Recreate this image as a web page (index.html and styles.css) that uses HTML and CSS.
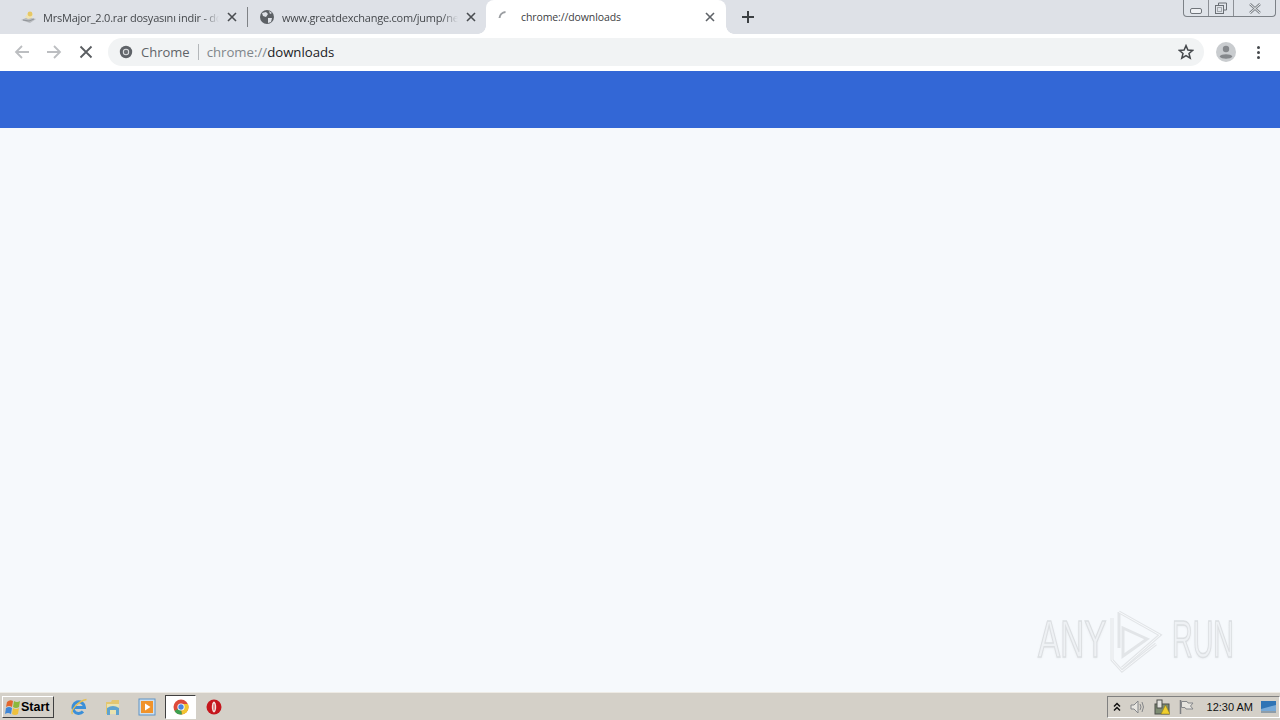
FILE: index.html
```html
<!doctype html>
<html>
<head>
  <meta charset="utf-8">
  <title>chrome://downloads</title>
  <link rel="stylesheet" href="styles.css">
</head>
<body>
<div class="screen">

  <div class="tabstrip">
    <div class="tab tab-first">
      <svg class="favicon" width="18" height="16" viewBox="0 0 18 16">
        <path d="M1 11 L8 8 L16 10 L10 14 Z" fill="#b9bcc0"/>
        <path d="M5 8 L9 3 L13 5 L12 9 L8 10 Z" fill="#efe3b4"/>
        <circle cx="10" cy="5" r="2.4" fill="#e6c765"/>
        <path d="M3 11 L9 12 L14 10" fill="none" stroke="#8f9398" stroke-width="1"/>
      </svg>
      <span class="tab-title">MrsMajor_2.0.rar dosyasını indir - do</span>
      <svg class="tab-close" width="10" height="10" viewBox="0 0 10 10"><path d="M1 1 L9 9 M9 1 L1 9" stroke="#4a4d51" stroke-width="1.6"/></svg>
    </div>
    <div class="tab-sep"></div>
    <div class="tab tab-second">
      <svg class="favicon" width="16" height="16" viewBox="0 0 16 16">
        <circle cx="8" cy="8" r="7" fill="#5c6065"/>
        <path d="M3 4 L7 3 L9 5 L7 8 L4 7 Z M9 9 L13 9 L12 13 L9 14 Z M10 2 L13 4 L11 5 Z" fill="#dee1e7"/>
      </svg>
      <span class="tab-title">www.greatdexchange.com/jump/ne</span>
      <svg class="tab-close" width="10" height="10" viewBox="0 0 10 10"><path d="M1 1 L9 9 M9 1 L1 9" stroke="#4a4d51" stroke-width="1.6"/></svg>
    </div>
    <div class="tab tab-active">
      <svg class="favicon" width="16" height="16" viewBox="0 0 16 16">
        <path d="M2.5 9 A6.5 6.5 0 0 1 8.500 3" fill="none" stroke="#9a9da1" stroke-width="2"/>
      </svg>
      <span class="tab-title">chrome://downloads</span>
      <svg class="tab-close" width="10" height="10" viewBox="0 0 10 10"><path d="M1 1 L9 9 M9 1 L1 9" stroke="#5f6368" stroke-width="1.6"/></svg>
    </div>
    <svg class="new-tab" width="14" height="14" viewBox="0 0 14 14"><path d="M7 1 V13 M1 7 H13" stroke="#3c4043" stroke-width="2"/></svg>
  </div>

  <div class="winbtns">
    <div class="winbtn winbtn-min"><svg width="12" height="6" viewBox="0 0 12 6"><rect x="0.5" y="0.5" width="11" height="5" rx="1.5" fill="#eef0f3" stroke="#70757b"/></svg></div>
    <div class="winbtn winbtn-max"><svg width="14" height="13" viewBox="0 0 14 13"><path d="M4.5 3 V1 H12.5 V8 H10" fill="none" stroke="#6a6f75"/><rect x="1.5" y="3.5" width="8" height="8" fill="none" stroke="#6a6f75"/><rect x="3.5" y="5.5" width="4" height="4" fill="none" stroke="#a5a9ae"/></svg></div>
    <div class="winbtn winbtn-close"><svg width="14" height="11" viewBox="0 0 14 11"><path d="M2 1 L12 10 M12 1 L2 10" stroke="#7b8086" stroke-width="2.4"/><path d="M2 1 L12 10 M12 1 L2 10" stroke="#eef0f3" stroke-width="1"/></svg></div>
  </div>

  <div class="toolbar">
    <svg class="nav-btn" width="16" height="16" viewBox="0 0 16 16"><path d="M15 8 H2 M8 2 L2 8 L8 14" fill="none" stroke="#bcbec1" stroke-width="1.8"/></svg>
    <svg class="nav-btn" width="16" height="16" viewBox="0 0 16 16"><path d="M1 8 H14 M8 2 L14 8 L8 14" fill="none" stroke="#bcbec1" stroke-width="1.8"/></svg>
    <svg class="nav-btn" width="16" height="16" viewBox="0 0 16 16"><path d="M2.5 2.5 L13.5 13.5 M13.5 2.5 L2.5 13.5" stroke="#5a5d61" stroke-width="1.8"/></svg>
    <div class="omnibox">
      <svg class="chip-icon" width="14" height="14" viewBox="0 0 14 14">
        <circle cx="7" cy="7" r="6.2" fill="#5f6368"/>
        <circle cx="7" cy="7" r="3.2" fill="#dfe1e3"/>
        <circle cx="7" cy="7" r="2.2" fill="#6d7175"/>
      </svg>
      <span class="chip-label">Chrome</span>
      <span class="chip-sep"></span>
      <span class="url"><span class="url-scheme">chrome://</span>downloads</span>
      <svg class="star" width="16" height="16" viewBox="0 0 16 16"><path d="M8 1.6 L9.9 6 L14.7 6.4 L11 9.5 L12.2 14.2 L8 11.7 L3.8 14.2 L5 9.5 L1.3 6.4 L6.1 6 Z" fill="none" stroke="#45484c" stroke-width="1.5"/></svg>
    </div>
    <svg class="avatar" width="20" height="20" viewBox="0 0 20 20">
      <circle cx="10" cy="10" r="10" fill="#c9cccf"/>
      <circle cx="10" cy="7" r="3.2" fill="#84878b"/>
      <path d="M3.6 14.5 C5 11.5 15 11.5 16.4 14.5 C14.5 17.5 5.5 17.5 3.6 14.5 Z" fill="#84878b"/>
    </svg>
    <div class="menu-dots"><i></i><i></i><i></i></div>
  </div>

  <div class="bluebar"></div>
  <div class="content"></div>

  <div class="watermark">
    <span class="wm-text wm-any">ANY</span>
    <svg class="wm-logo" width="65" height="70" viewBox="0 0 65 70">
      <g fill="none" stroke="#e2e5e8" stroke-width="3">
        <path d="M17 6 L58 29 L20 62"/>
        <path d="M10 12 V54 L20 65 L54 38"/>
        <path d="M21 22 L45 33 L21 50 Z"/>
        <path d="M17 6 V42"/>
      </g>
      <g fill="none" stroke="#f7f9fb" stroke-width="1">
        <path d="M17 6 L58 29 L20 62"/>
        <path d="M10 12 V54 L20 65 L54 38"/>
      </g>
    </svg>
    <span class="wm-text wm-run">RUN</span>
  </div>

  <div class="taskbar">
    <div class="start-btn">
      <svg width="17" height="16" viewBox="0 0 17 16">
        <path d="M3 3 Q6 0 9 2 L8 8 Q5 6 2 8 Z" fill="#e2662c"/>
        <path d="M10 2 Q13 4 16 2 L15 8 Q12 10 9 8 Z" fill="#8cb83c"/>
        <path d="M2 9 Q5 7 8 9 L7 15 Q4 13 1 15 Z" fill="#3f86d6"/>
        <path d="M9 9 Q12 11 15 9 L14 15 Q11 17 8 15 Z" fill="#efc13c"/>
      </svg>
      <span>Start</span>
    </div>
    <div class="quick">
      <div class="quick-item">
        <svg width="18" height="18" viewBox="0 0 18 18">
          <path d="M3 9.5 H14.5 A5.8 5.8 0 1 0 13 13.5" fill="none" stroke="#3b8fd8" stroke-width="3"/>
          <path d="M2.5 16 C0 13 8 3 16.5 1.5" fill="none" stroke="#e6bf52" stroke-width="1.3"/>
        </svg>
      </div>
      <div class="quick-item">
        <svg width="18" height="18" viewBox="0 0 18 18">
          <path d="M2 4 H7 L8 2 H15 V16 H2 Z" fill="#e3c670"/>
          <rect x="3" y="6" width="12" height="10" fill="#e9e2b0"/>
          <path d="M3 17 V10 Q9 6 15 10 V17 H12 V12 H6 V17 Z" fill="#5fa3cf"/>
        </svg>
      </div>
      <div class="quick-item">
        <svg width="18" height="18" viewBox="0 0 18 18">
          <rect x="1" y="1" width="16" height="16" fill="#cfe0ee" stroke="#5e93c6"/>
          <rect x="3" y="3" width="12" height="12" fill="#f0932b"/>
          <path d="M7 5.5 L12.5 9 L7 12.5 Z" fill="#fff"/>
        </svg>
      </div>
      <div class="quick-item quick-active">
        <svg width="16" height="16" viewBox="0 0 16 16">
          <circle cx="8" cy="8" r="7.5" fill="#dd4a3a"/>
          <path d="M8 8 L1.5 12 A7.5 7.5 0 0 0 9 15.4 Z" fill="#3da04f"/>
          <path d="M8 8 L9 15.4 A7.5 7.5 0 0 0 15 5 L8 5 Z" fill="#f2c431"/>
          <circle cx="8" cy="8" r="3.6" fill="#fff"/>
          <circle cx="8" cy="8" r="2.7" fill="#4a84e0"/>
        </svg>
      </div>
      <div class="quick-item">
        <svg width="16" height="16" viewBox="0 0 16 16">
          <circle cx="8" cy="8" r="7.5" fill="#c5161d"/>
          <ellipse cx="8" cy="8" rx="2.2" ry="5.4" fill="#f3e3e0"/>
          <ellipse cx="8" cy="8" rx="0.8" ry="3.6" fill="#d9706f"/>
        </svg>
      </div>
    </div>
    <div class="tray">
      <svg width="8" height="10" viewBox="0 0 8 10"><path d="M1 4.5 L4 1.5 L7 4.5 M1 8.5 L4 5.5 L7 8.5" fill="none" stroke="#111" stroke-width="1.5"/></svg>
      <svg class="tray-sound" width="16" height="16" viewBox="0 0 16 16">
        <path d="M1 6 H4 L8 2 V14 L4 10 H1 Z" fill="#e8e6e1" stroke="#85878a"/>
        <path d="M10 5 Q12 8 10 11 M12 3 Q15 8 12 13" fill="none" stroke="#85878a"/>
      </svg>
      <svg class="tray-net" width="16" height="16" viewBox="0 0 16 16">
        <rect x="1" y="5" width="14" height="10" fill="#7d8c72" stroke="#4c4f4b"/>
        <rect x="3" y="1" width="5" height="8" fill="#e4e4e0" stroke="#4c4f4b"/>
        <path d="M11.5 6 L16 15 H7 Z" fill="#f0cf2e" stroke="#8a7410" stroke-width="0.5"/>
      </svg>
      <svg class="tray-flag" width="16" height="16" viewBox="0 0 16 16">
        <path d="M2.5 1 V15" stroke="#7d7f82" stroke-width="1.5"/>
        <path d="M3.5 2.5 H9 L10 4 H15 L12.5 7 L15 10 H8 L7 8.5 H3.5 Z" fill="#e6e4df" stroke="#85878a"/>
      </svg>
      <span class="clock">12:30 AM</span>
      <svg class="show-desktop" width="15" height="12" viewBox="0 0 15 12">
        <rect x="0" y="0" width="15" height="10" fill="#2f74b5"/>
        <path d="M0 8 L15 4 V10 H0 Z" fill="#78aad8"/>
        <rect x="0" y="10" width="15" height="2" fill="#8f9da8"/>
      </svg>
    </div>
  </div>

</div>
</body>
</html>
```

FILE: styles.css
```css
html, body { margin:0; padding:0; }
body { font-family:"Open Sans", "Liberation Sans", sans-serif; font-size:12px; color:#3c4043; overflow:hidden; }

.screen { position:relative; width:1280px; height:720px; display:flex; flex-direction:column; background:#f6f9fc; }

/* tabs */
.tabstrip { height:34px; flex:none; display:flex; align-items:center; background:#dee1e7; }
.tab { height:34px; flex:none; display:flex; align-items:center; box-sizing:border-box; }
.tab-first { width:247px; padding:0 10px 0 20px; }
.tab-second { width:238px; padding:0 10px 0 11px; }
.tab-active { position:relative; width:240px; padding:0 11px; background:#fff; border-radius:8px 8px 0 0; }
.tab-active::before, .tab-active::after { content:""; position:absolute; bottom:0; width:8px; height:8px; }
.tab-active::before { left:-8px; background:radial-gradient(circle at 0 0, #dee1e7 7.5px, #fff 8px); }
.tab-active::after { right:-8px; background:radial-gradient(circle at 100% 0, #dee1e7 7.5px, #fff 8px); }
.favicon { flex:none; margin-right:7px; }
.tab-first .favicon { margin-right:5px; }
.tab-active .favicon { margin-right:8px; }
.tab-title { flex:1; white-space:nowrap; font-size:11px; letter-spacing:-0.22px; color:#45484c; min-width:0;
  -webkit-mask-image:linear-gradient(to right, #000 calc(100% - 16px), transparent); mask-image:linear-gradient(to right, #000 calc(100% - 16px), transparent); }
.tab-active .tab-title { font-size:10.5px; letter-spacing:-0.1px; -webkit-mask-image:none; mask-image:none; color:#3c4043; }
.tab-close { flex:none; margin-left:8px; }
.tab-sep { width:1px; height:20px; flex:none; background:#7f8286; }
.new-tab { flex:none; margin-left:15px; }

/* window buttons */
.winbtns { position:absolute; top:0; right:4px; display:flex; height:16px; border:1px solid #7c8187; border-top:0; border-radius:0 0 4px 4px; background:#dfe3e9; }
.winbtn { display:flex; align-items:center; justify-content:center; box-sizing:border-box; height:16px; }
.winbtn-min { width:25px; border-right:1px solid #8c9096; padding-top:5px; }
.winbtn-max { width:25px; border-right:1px solid #8c9096; }
.winbtn-close { width:41px; }

/* toolbar */
.toolbar { height:37px; flex:none; box-sizing:border-box; display:flex; align-items:center; padding:0 0 1px 14px; background:#fff; }
.nav-btn { flex:none; margin-right:16px; }
.omnibox { width:1096px; height:28px; flex:none; margin-left:-2px; box-sizing:border-box; display:flex; align-items:center; padding:0 10px 0 11px; background:#f1f3f4; border-radius:14px; }
.chip-icon { flex:none; }
.chip-label { margin-left:8px; font-size:13px; color:#5f6368; }
.chip-sep { width:1px; height:16px; margin:0 8px; background:#b4b7ba; }
.url { flex:1; font-size:13.2px; color:#202124; }
.url-scheme { color:#80868b; }
.star { flex:none; }
.avatar { flex:none; margin-left:12px; }
.menu-dots { flex:none; margin-left:21px; display:flex; flex-direction:column; gap:2px; }
.menu-dots i { display:block; width:3px; height:3px; background:#45484c; border-radius:50%; }

/* page */
.bluebar { height:57px; flex:none; background:#3367d6; }
.content { flex:1; background:#f6f9fc; }

.watermark { position:absolute; left:1038px; top:606px; width:200px; height:70px; }
.wm-text { position:absolute; top:3px; font-family:"Liberation Sans", sans-serif; font-size:52px; line-height:60px; color:#eef1f4; -webkit-text-stroke:1.5px #dcdfe2; transform-origin:0 0; text-shadow:0 1px 3px #e4e7ea; }
.wm-any { left:0; transform:scaleX(0.64); }
.wm-run { left:134px; transform:scaleX(0.55); }
.wm-logo { position:absolute; left:64px; top:0; }

/* taskbar */
.taskbar { height:28px; flex:none; box-sizing:border-box; display:flex; align-items:center; background:#d4d0c8; border-top:1px solid #eeebe5; }
.start-btn { width:52px; height:22px; margin-left:2px; flex:none; box-sizing:border-box; display:flex; align-items:center; gap:0; padding-left:1px; background:#d4d0c8; border:1px solid; border-color:#fff #404040 #404040 #fff; font-family:"Liberation Sans", sans-serif; font-weight:bold; font-size:12.5px; color:#000; }
.quick { display:flex; align-items:center; margin-left:8px; gap:0; }
.quick-item { width:34px; height:24px; display:flex; align-items:center; justify-content:center; box-sizing:border-box; flex:none; }
.quick-active { width:31px; margin:0 1px; background:#fff; border:1px solid; border-color:#404040 #fff #fff #404040; }
.tray { margin-left:auto; height:22px; box-sizing:border-box; display:flex; align-items:center; padding-left:5px; border:1px solid; border-color:#808080 #fff #fff #808080; }
.tray-sound { margin-left:9px; }
.tray-net { margin-left:8px; }
.tray-flag { margin-left:8px; }
.clock { margin:0 8px 0 13px; font-size:11px; color:#111; font-family:"Liberation Sans", sans-serif; }
.show-desktop { margin-right:3px; }
```
